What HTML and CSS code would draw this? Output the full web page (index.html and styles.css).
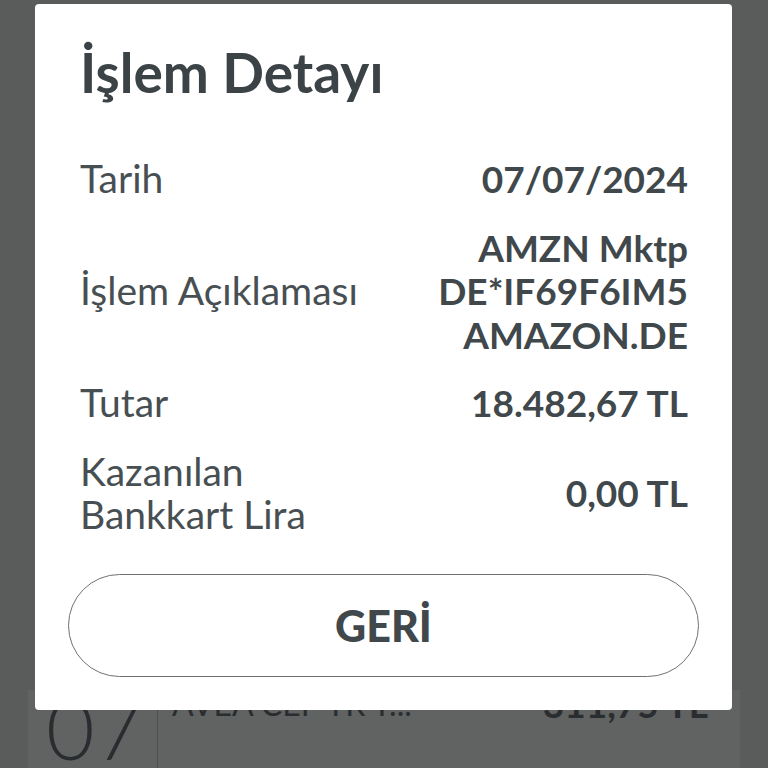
FILE: index.html
```html
<!DOCTYPE html>
<html lang="tr">
<head>
<meta charset="utf-8">
<title>İşlem Detayı</title>
<link rel="stylesheet" href="styles.css">
</head>
<body>
<div class="page">
  <div class="list">
    <div class="tx-row">
      <div class="tx-day">07</div>
      <div class="tx-body">
        <span class="tx-name">AVEA CEP TR T...</span>
        <span class="tx-amount">311,75 TL</span>
      </div>
    </div>
  </div>
</div>

<div class="modal">
  <h1 class="modal-title">İşlem Detayı</h1>
  <div class="rows">
    <div class="row">
      <div class="label">Tarih</div>
      <div class="value">07/07/2024</div>
    </div>
    <div class="row">
      <div class="label">İşlem Açıklaması</div>
      <div class="value">AMZN Mktp<br>DE*IF69F6IM5<br>AMAZON.DE</div>
    </div>
    <div class="row">
      <div class="label">Tutar</div>
      <div class="value">18.482,67 TL</div>
    </div>
    <div class="row">
      <div class="label">Kazanılan<br>Bankkart Lira</div>
      <div class="value">0,00 TL</div>
    </div>
  </div>
  <button class="back-btn" type="button">GERİ</button>
</div>
</body>
</html>
```

FILE: styles.css
```css
html, body {
  margin: 0;
  padding: 0;
}

body {
  width: 768px;
  height: 768px;
  overflow: hidden;
  background: #5a5b5b;
  font-family: "Lato", "Open Sans", sans-serif;
  position: relative;
}

.page {
  padding: 690px 28px 0 28px;
}

.list {
  background: #616262;
}

.tx-row {
  display: flex;
  height: 90px;
}

.tx-day {
  width: 130px;
  box-sizing: border-box;
  padding-left: 18px;
  font-size: 84px;
  font-weight: 300;
  line-height: 80px;
  color: #2a2d2f;
  border-right: 1px solid #4c4d4e;
  margin-top: -2px;
}

.tx-body {
  flex: 1;
  display: flex;
  justify-content: space-between;
  padding: 0 32px 0 14px;
  font-size: 32px;
  line-height: 40px;
  color: #2a2d2f;
  margin-top: -6px;
}

.tx-amount {
  font-size: 37px;
  font-weight: 700;
}

.modal {
  position: absolute;
  left: 35px;
  top: 4px;
  width: 697px;
  height: 706px;
  box-sizing: border-box;
  background: #ffffff;
  border-radius: 4px;
  padding: 38px 44px 34px 45px;
  color: #3f474b;
}

.modal-title {
  margin: 0;
  font-size: 55px;
  line-height: 60px;
  font-weight: 700;
  color: #3b4347;
}

.rows {
  display: flex;
  flex-direction: column;
  gap: 25px;
  margin-top: 55px;
}

.row {
  display: flex;
  justify-content: space-between;
  align-items: center;
  line-height: 43.5px;
}

.label {
  font-size: 39px;
  font-weight: 400;
  color: #484f53;
}

.value {
  font-size: 37px;
  font-weight: 700;
  text-align: right;
  color: #40484c;
}

.back-btn {
  display: block;
  box-sizing: border-box;
  width: calc(100% + 23px);
  height: 103px;
  margin: 37px -11px 0 -12px;
  background: #ffffff;
  border: 1.5px solid #6e7274;
  border-radius: 52px;
  font-family: "Lato", sans-serif;
  font-size: 43px;
  font-weight: 900;
  color: #40484c;
  cursor: pointer;
}
```
